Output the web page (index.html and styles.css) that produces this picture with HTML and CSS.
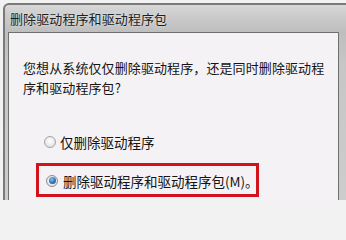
FILE: index.html
```html
<!DOCTYPE html>
<html lang="zh-CN">
<head>
<meta charset="utf-8">
<link rel="stylesheet" href="styles.css">
</head>
<body>
<div class="window">
  <div class="frame">
    <div class="title">删除驱动程序和驱动程序包</div>
    <div class="panel">
      <p class="question">您想从系统仅仅删除驱动程序，还是同时删除驱动程序和驱动程序包?</p>
      <div class="options">
        <label class="option">
          <span class="radio"></span>
          <span class="label">仅删除驱动程序</span>
        </label>
        <div class="highlight">
          <label class="option option-checked">
            <span class="radio radio-checked"><span class="dot"></span></span>
            <span class="label">删除驱动程序和驱动程序包(M)。</span>
          </label>
        </div>
      </div>
    </div>
  </div>
</div>
</body>
</html>
```
FILE: styles.css
```css
html, body {
  margin: 0;
  padding: 0;
  width: 346px;
  height: 200px;
  overflow: hidden;
  background: #f2f2f2;
}
.window {
  height: 200px;
  padding-top: 3px;
  box-sizing: border-box;
  font-family: "Noto Sans CJK SC", "Noto Sans", sans-serif;
  color: #141414;
}
.frame {
  margin-left: 3px;
  width: 352px;
  height: 230px;
  box-sizing: border-box;
  border: 2px solid #7a7a7a;
  border-bottom: none;
  border-radius: 6px 6px 0 0;
  background: linear-gradient(#d8d8d8 0px, #cacaca 12px, #bebebe 28px, #c6c6c6 60px, #cdcdcd 200px);
  padding: 0 8px 0 3px;
}
.title {
  height: 27px;
  line-height: 28px;
  font-size: 13px;
  padding-left: 2px;
  color: #1e1e1e;
  text-shadow: 0 0 3px rgba(255,255,255,0.7);
  letter-spacing: 0.1px;
  white-space: nowrap;
}
.panel {
  width: 331px;
  height: 200px;
  box-sizing: border-box;
  border: 1px solid #6f6f6f;
  background: #f4f2f5;
  padding: 25px 0 0 14px;
}
.question {
  margin: 0;
  font-size: 13px;
  line-height: 20px;
  width: 305px;
  letter-spacing: 0.1px;
}
.options {
  margin-top: 34px;
  display: flex;
  flex-direction: column;
  gap: 11px;
}
.option {
  display: flex;
  align-items: center;
  height: 20px;
  padding-left: 21px;
  gap: 4px;
  font-size: 13.5px;
  white-space: nowrap;
}
.radio {
  width: 12px;
  height: 12px;
  box-sizing: border-box;
  border-radius: 50%;
  border: 1px solid #a3a3a3;
  background: radial-gradient(circle at 50% 40%, #ffffff 0, #f0f0f0 40%, #d9d9d9 100%);
  display: flex;
  align-items: center;
  justify-content: center;
  flex: none;
}
.radio-checked {
  border-color: #8d8d8d;
}
.dot {
  width: 7px;
  height: 7px;
  border-radius: 50%;
  background: radial-gradient(circle at 40% 35%, #8fc4ee 0, #2f78c0 50%, #1b4f8a 100%);
}
.highlight {
  margin-left: 13px;
  width: 223px;
  height: 34px;
  box-sizing: border-box;
  border: 3px solid #d2121c;
  display: flex;
  align-items: center;
}
.option-checked {
  padding-left: 7px;
  gap: 5px;
  margin-top: 1px;
}
```
